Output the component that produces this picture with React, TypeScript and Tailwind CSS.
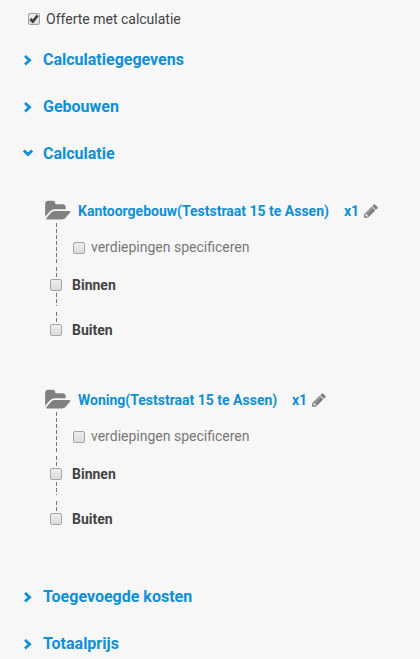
import clsx from 'clsx'

const buildings = [
  { name: 'Kantoorgebouw(Teststraat 15 te Assen)', count: 'x1', nameWidth: 'w-[251px]' },
  { name: 'Woning(Teststraat 15 te Assen)', count: 'x1', nameWidth: 'w-[199px]' },
]

function Chevron({ open = false }: { open?: boolean }) {
  return (
    <svg className="h-3 w-3 shrink-0" viewBox="0 0 12 12" fill="none" stroke="currentColor" strokeWidth="2.8">
      {open ? <path d="M1.8 2.4L6 6.6l4.2-4.2" /> : <path d="M3 1.9L7.6 6.2 3 10.5" />}
    </svg>
  )
}

function FolderIcon() {
  return (
    <svg className="mb-px h-6 w-[26px] shrink-0" viewBox="0 0 1920 1792" fill="currentColor">
      <path d="M1879 952q0 31-31 66l-336 396q-43 51-120.5 86.5t-143.5 35.5h-1088q-34 0-60.5-13t-26.5-43q0-31 31-66l336-396q43-51 120.5-86.5t143.5-35.5h1088q34 0 60.5 13t26.5 43zm-343-344v160h-832q-94 0-197 47.5t-164 119.5l-337 396-5 6q0-4-.5-12.5t-.5-12.5v-960q0-92 66-158t158-66h320q92 0 158 66t66 158v32h544q92 0 158 66t66 158z" />
    </svg>
  )
}

function PencilIcon() {
  return (
    <svg className="h-4 w-4 shrink-0" viewBox="0 0 1792 1792" fill="currentColor">
      <path d="M491 1536l91-91-235-235-91 91v107h128v128h107zm523-928q0-22-22-22-10 0-17 7l-542 542q-7 7-7 17 0 22 22 22 10 0 17-7l542-542q7-7 7-17zm-54-192l416 416-832 832h-416v-416zm683 96q0 53-37 90l-166 166-416-416 166-165q36-38 90-38 53 0 91 38l235 234q37 39 37 91z" />
    </svg>
  )
}

function Checkbox({ checked = false }: { checked?: boolean }) {
  return (
    <span
      className={clsx(
        'block h-3 w-3 shrink-0 rounded-[2px] border bg-linear-to-b from-[#eeeeee] to-[#dcdcdc]',
        checked ? 'border-[#a0a0a0]' : 'border-[#a6a6a6]',
      )}
    >
      {checked && (
        <svg className="block h-2.5 w-2.5" viewBox="0 0 10 10" fill="none" stroke="#404040" strokeWidth="2.6">
          <path d="M1.3 5l2.5 2.5L8.7 1.4" />
        </svg>
      )}
    </span>
  )
}

function Section({ title, open }: { title: string; open?: boolean }) {
  return (
    <div className="flex h-[47px] items-center gap-[9px] pl-[22px] text-[#0d90d9]">
      <Chevron open={open} />
      <h2 className="text-base font-bold">{title}</h2>
    </div>
  )
}

function Dashes({ className }: { className: string }) {
  return (
    <div
      className={clsx(
        'w-px bg-[repeating-linear-gradient(to_bottom,#777_0,#777_4px,transparent_4px,transparent_6px)]',
        className,
      )}
    />
  )
}

function Building({ name, count, nameWidth }: (typeof buildings)[number]) {
  return (
    <div className="flex h-[189px] flex-col pl-[45px]">
      <div className="flex h-6 items-center text-[#808080]">
        <FolderIcon />
        <span className={clsx('ml-[7px] whitespace-nowrap text-sm font-bold text-[#0d90d9]', nameWidth)}>{name}</span>
        <span className="ml-[15px] mr-1 w-[15px] text-sm font-bold text-[#0d90d9]">{count}</span>
        <PencilIcon />
      </div>
      <div className="flex h-11 pl-[11px]">
        <Dashes className="h-10" />
        <label className="flex h-[49px] items-center gap-1.5 pl-4 text-sm text-[#777]">
          <Checkbox />
          <span className="pb-0.5">verdiepingen specificeren</span>
        </label>
      </div>
      {['Binnen', 'Buiten'].map((floor) => (
        <div key={floor} className="flex h-[45px] flex-col">
          <Dashes className="ml-[11px] h-3 shrink-0" />
          <label className="flex h-3 shrink-0 items-center gap-2.5 pl-[5px] text-sm font-bold text-[#444]">
            <Checkbox />
            {floor}
          </label>
          {floor === 'Binnen' && <Dashes className="mt-0.5 ml-[11px] h-[13px] shrink-0" />}
        </div>
      ))}
    </div>
  )
}

export default function App() {
  return (
    <main className="h-[659px] w-[420px] overflow-hidden bg-[#f7f7f7] font-['Roboto',sans-serif]">
      <label className="flex h-9 items-center gap-1.5 pt-0.5 pl-7 text-sm text-[#444]">
        <Checkbox checked />
        Offerte met calculatie
      </label>
      <Section title="Calculatiegegevens" />
      <Section title="Gebouwen" />
      <Section title="Calculatie" open />
      <div className="h-[396px] pt-[22px]">
        {buildings.map((building) => (
          <Building key={building.name} {...building} />
        ))}
      </div>
      <Section title="Toegevoegde kosten" />
      <Section title="Totaalprijs" />
    </main>
  )
}
